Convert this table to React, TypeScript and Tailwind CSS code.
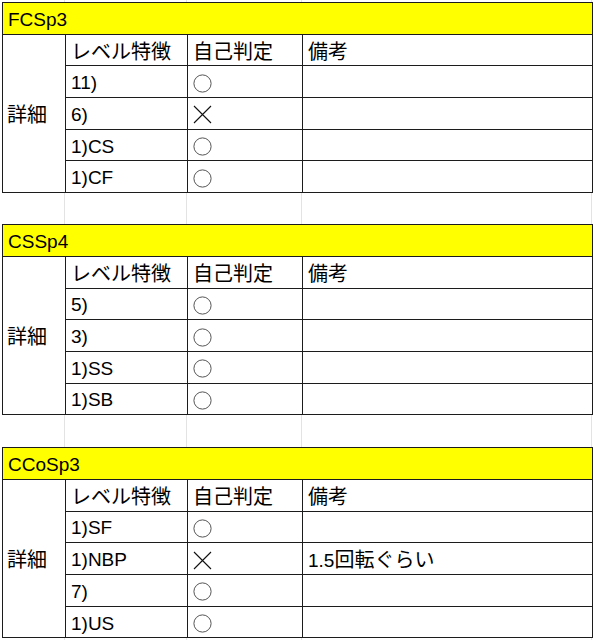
const cols = "grid grid-cols-[63px_122px_115px_290px]";

type Row = { level: string; mark: "o" | "x"; note?: string };

const sections: { title: string; rows: Row[] }[] = [
  {
    title: "FCSp3",
    rows: [
      { level: "11)", mark: "o" },
      { level: "6)", mark: "x" },
      { level: "1)CS", mark: "o" },
      { level: "1)CF", mark: "o" },
    ],
  },
  {
    title: "CSSp4",
    rows: [
      { level: "5)", mark: "o" },
      { level: "3)", mark: "o" },
      { level: "1)SS", mark: "o" },
      { level: "1)SB", mark: "o" },
    ],
  },
  {
    title: "CCoSp3",
    rows: [
      { level: "1)SF", mark: "o" },
      { level: "1)NBP", mark: "x", note: "1.5回転ぐらい" },
      { level: "7)", mark: "o" },
      { level: "1)US", mark: "o" },
    ],
  },
];

// empty spreadsheet strip between tables (faint grid lines)
function Gap({ h }: { h: string }) {
  return (
    <div className={`${cols} ${h}`}>
      <div className="border-r border-[#e3e3e3]" />
      <div className="border-r border-[#e3e3e3]" />
      <div className="border-r border-[#e3e3e3]" />
      <div className="border-r border-[#e3e3e3]" />
    </div>
  );
}

function Cell({
  children,
  className = "",
  colSpan,
}: {
  children?: React.ReactNode;
  className?: string;
  colSpan?: number;
}) {
  return (
    <td
      colSpan={colSpan}
      className={`border border-[#1c1c1c] h-[31.7px] p-0 pl-[5px] pt-[3px] align-middle leading-[22px] ${className}`}
    >
      {children}
    </td>
  );
}

function Mark({ kind }: { kind: "o" | "x" }) {
  if (kind === "o")
    return (
      <svg width="19" height="19" viewBox="0 0 19 19" className="block">
        <circle cx="9.5" cy="9.5" r="8.6" fill="none" stroke="#555" strokeWidth="1" />
      </svg>
    );
  return (
    <svg width="19" height="19" viewBox="0 0 19 19" className="block">
      <path d="M1 1L18 18M18 1L1 18" stroke="#111" strokeWidth="1.1" />
    </svg>
  );
}

function Section({ title, rows }: { title: string; rows: Row[] }) {
  return (
    <table className="border-collapse table-fixed w-[590px]">
      <colgroup>
        <col className="w-[63px]" />
        <col className="w-[122px]" />
        <col className="w-[115px]" />
        <col className="w-[290px]" />
      </colgroup>
      <tbody>
        <tr>
          <Cell className="bg-[#ffff00]" colSpan={4}>
            {title}
          </Cell>
        </tr>
        <tr>
          <td rowSpan={5} className="border border-[#1c1c1c] p-0 pl-[4px] pt-[3px] align-middle text-[20px]">
            詳細
          </td>
          <Cell className="text-[20px]">レベル特徴</Cell>
          <Cell className="text-[20px]">自己判定</Cell>
          <Cell className="text-[20px]">備考</Cell>
        </tr>
        {rows.map((r) => (
          <tr key={r.level}>
            <Cell>{r.level}</Cell>
            <Cell className="pt-0">
              <Mark kind={r.mark} />
            </Cell>
            <Cell>
              {r.note ? (
                <>
                  1.5<span className="text-[20px]">回転ぐらい</span>
                </>
              ) : (
                ""
              )}
            </Cell>
          </tr>
        ))}
      </tbody>
    </table>
  );
}

export default function App() {
  return (
    <div className="w-[593px] h-[640px] overflow-hidden bg-white text-black text-[19px] font-['Liberation_Sans','Noto_Sans_CJK_JP',sans-serif]">
      <div className="ml-[2px]">
        <Gap h="h-[2px]" />
        <Section {...sections[0]} />
        <Gap h="h-[31px]" />
        <Section {...sections[1]} />
        <Gap h="h-[32px]" />
        <Section {...sections[2]} />
        <Gap h="h-[10px]" />
      </div>
    </div>
  );
}
